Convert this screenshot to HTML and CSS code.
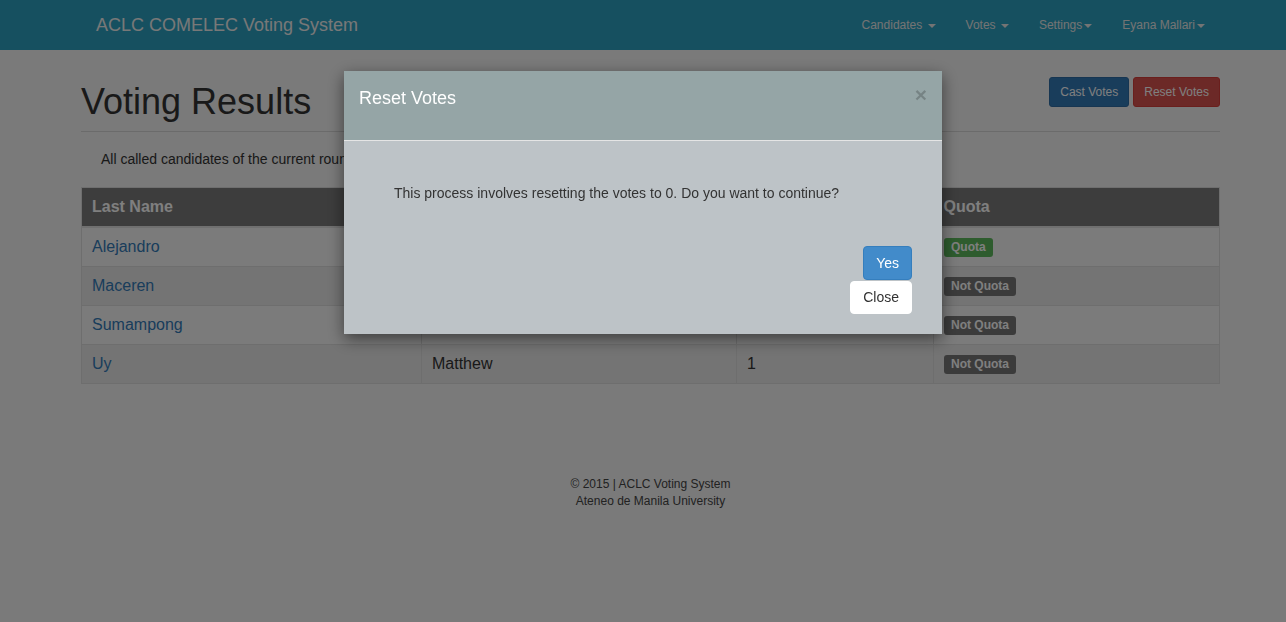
FILE: index.html
```html
<!DOCTYPE html>
<html lang="en">
<head>
<meta charset="utf-8">
<title>Voting Results</title>
<link rel="stylesheet" href="styles.css">
</head>
<body>
<nav class="navbar">
  <div class="container navbar-inner">
    <a class="brand" href="#">ACLC COMELEC Voting System</a>
    <ul class="nav">
      <li><a href="#">Candidates <span class="caret"></span></a></li>
      <li><a href="#">Votes <span class="caret"></span></a></li>
      <li><a href="#">Settings<span class="caret"></span></a></li>
      <li><a href="#">Eyana Mallari<span class="caret"></span></a></li>
    </ul>
  </div>
</nav>

<main class="container">
  <div class="page-header">
    <h1>Voting Results</h1>
    <div class="actions">
      <a class="btn btn-sm btn-primary" href="#">Cast Votes</a>
      <a class="btn btn-sm btn-danger" href="#">Reset Votes</a>
    </div>
  </div>
  <p class="lead-note">All called candidates of the current round and their vote counts.</p>

  <table class="results">
    <colgroup>
      <col class="c1"><col class="c2"><col class="c3"><col class="c4">
    </colgroup>
    <thead>
      <tr><th>Last Name</th><th>First Name</th><th>Votes</th><th>Quota</th></tr>
    </thead>
    <tbody>
      <tr><td><a href="#">Alejandro</a></td><td>Miguel</td><td>3</td><td><span class="label label-success">Quota</span></td></tr>
      <tr><td><a href="#">Maceren</a></td><td>Bianca</td><td>1</td><td><span class="label label-default">Not Quota</span></td></tr>
      <tr><td><a href="#">Sumampong</a></td><td>Paolo</td><td>1</td><td><span class="label label-default">Not Quota</span></td></tr>
      <tr><td><a href="#">Uy</a></td><td>Matthew</td><td>1</td><td><span class="label label-default">Not Quota</span></td></tr>
    </tbody>
  </table>

  <footer class="footer">
    <div>&copy; 2015 | ACLC Voting System</div>
    <div>Ateneo de Manila University</div>
  </footer>
</main>

<div class="backdrop"></div>

<div class="modal" role="dialog">
  <div class="modal-header">
    <h4 class="modal-title">Reset Votes</h4>
    <span class="close">&times;</span>
  </div>
  <div class="modal-body">
    <p>This process involves resetting the votes to 0. Do you want to continue?</p>
    <div class="modal-actions">
      <button class="mbtn mbtn-yes">Yes</button>
      <button class="mbtn mbtn-close">Close</button>
    </div>
  </div>
</div>
</body>
</html>
```

FILE: styles.css
```css
* { box-sizing: border-box; }

html, body {
  margin: 0;
  padding: 0;
}

body {
  font-family: "Liberation Sans", Arial, sans-serif;
  font-size: 14px;
  line-height: 1.42857;
  color: #333;
  background: #f4f4f4;
}

a { text-decoration: none; }

.container {
  width: 1139px;
  margin-left: 81px;
}

/* Navbar */
.navbar {
  height: 50px;
  background: #2ca0c0;
}

.navbar-inner {
  display: flex;
  justify-content: space-between;
  align-items: center;
  height: 50px;
}

.brand {
  padding: 15px;
  font-size: 18px;
  line-height: 20px;
  color: #f0f0f0;
}

.nav {
  display: flex;
  list-style: none;
  margin: 0;
  padding: 0;
}

.nav a {
  display: block;
  padding: 15px;
  font-size: 12px;
  line-height: 20px;
  color: #e8e8e8;
}

.caret {
  display: inline-block;
  width: 0;
  height: 0;
  margin-left: 2px;
  vertical-align: middle;
  border-top: 4px solid;
  border-left: 4px solid transparent;
  border-right: 4px solid transparent;
}

/* Page header */
.page-header {
  display: flex;
  justify-content: space-between;
  align-items: flex-start;
  margin-top: 27px;
  padding-bottom: 9px;
  border-bottom: 1px solid #d6d6d6;
}

.page-header h1 {
  margin: 5px 0 0;
  font-size: 36px;
  font-weight: 500;
  line-height: 1.1;
  color: #333;
}

.actions {
  display: flex;
  gap: 4px;
}

.btn {
  display: inline-block;
  border: 1px solid transparent;
  border-radius: 3px;
  color: #fff;
}

.btn-sm {
  padding: 5px 10px;
  font-size: 12px;
  line-height: 1.5;
}

.btn-primary { background: #337ab7; border-color: #2e6da4; }
.btn-danger { background: #d9534f; border-color: #d43f3a; }

.lead-note {
  margin: 17px 0 18px;
  padding-left: 20px;
  font-size: 14px;
  line-height: 20px;
}

/* Table */
.results {
  width: 1139px;
  border-collapse: collapse;
  table-layout: fixed;
  border: 1px solid #dcdcdc;
  font-size: 16px;
}

.results col.c1 { width: 340px; }
.results col.c2 { width: 315px; }
.results col.c3 { width: 197px; }

.results th,
.results td {
  padding: 8px 10px;
  line-height: 22px;
  text-align: left;
}

.results th {
  background: #7a7a7a;
  color: #fff;
  font-weight: bold;
  border-bottom: 2px solid #e0e0e0;
}

.results td {
  border: 1px solid #dcdcdc;
  color: #333;
}

.results tbody tr:nth-child(odd) td { background: #f7f7f7; }
.results tbody tr:nth-child(even) td { background: #e8e8e8; }

.results td a { color: #337ab7; }

.label {
  display: inline-block;
  padding: 3px 7px 4px;
  font-size: 12px;
  font-weight: bold;
  line-height: 1;
  color: #fff;
  border-radius: 3px;
  vertical-align: 1px;
}

.label-success { background: #5cb85c; }
.label-default { background: #777; }

/* Footer */
.footer {
  margin-top: 92px;
  text-align: center;
  font-size: 12px;
  line-height: 17px;
  color: #444;
}

/* Modal */
.backdrop {
  position: fixed;
  inset: 0;
  background: rgba(0, 0, 0, 0.5);
}

.modal {
  position: fixed;
  top: 71px;
  left: 344px;
  width: 598px;
  background: #bdc3c7;
  box-shadow: 0 5px 15px rgba(0, 0, 0, 0.5);
}

.modal-header {
  position: relative;
  height: 70px;
  padding: 15px;
  background: #95a5a6;
  border-bottom: 1px solid #e5e5e5;
}

.modal-title {
  margin: 0;
  font-size: 18px;
  font-weight: 500;
  line-height: 25px;
  color: #fff;
}

.close {
  position: absolute;
  top: 13px;
  right: 15px;
  font-size: 21px;
  font-weight: bold;
  line-height: 21px;
  color: #000;
  opacity: 0.2;
}

.modal-body {
  padding: 42px 30px 20px 50px;
}

.modal-body p {
  margin: 0;
  font-size: 14px;
  line-height: 20px;
  color: #333;
}

.modal-actions {
  display: flex;
  flex-direction: column;
  align-items: flex-end;
  margin-top: 43px;
}

.mbtn {
  font-family: "Liberation Sans", Arial, sans-serif;
  font-size: 14px;
  line-height: 20px;
  border: 1px solid transparent;
  border-radius: 4px;
}

.mbtn-yes {
  padding: 6px 12px;
  background: #428bca;
  border-color: #357ebd;
  color: #fff;
}

.mbtn-close {
  padding: 5px 12px 6px;
  margin-top: 1px;
  background: #fff;
  border-color: #fff;
  color: #333;
}
```
